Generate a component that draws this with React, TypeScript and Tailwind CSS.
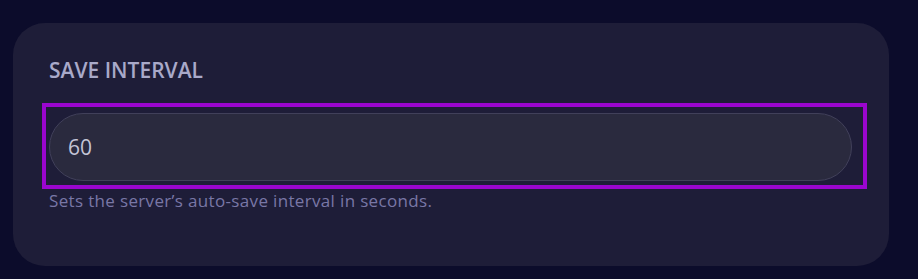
import React from 'react';

const font = { fontFamily: '"Open Sans", "Noto Sans", sans-serif' };

export default function App() {
  return (
    <div className="min-h-[279px] w-full bg-[#0c0c2b] pt-[23px] pl-[13px] pr-[29px] pb-[14px]" style={font}>
      <div className="rounded-[32px] bg-[#1e1d38] pl-[29px] pr-[22px] pt-[33px] pb-[54px]">
        <h2 className="pl-[7px] text-[21px] font-semibold text-[#a9a9c9] leading-[28px]">
          SAVE INTERVAL
        </h2>
        <div className="mt-[19px] border-[4px] border-[#9a06cf] pl-[3px] pt-[6px] pr-[11px] pb-[4px]">
          <input
            type="text"
            defaultValue="60"
            className="block h-[68px] w-full rounded-full border border-[#41405a] bg-[#2a2a3e] px-[18px] text-[21px] text-[#c4c4d6] outline-none"
            style={font}
          />
        </div>
        <p className="pl-[7px] mt-[1px] text-[17px] tracking-[0.02em] leading-[22px] text-[#7977a6]">
          Sets the server’s auto-save interval in seconds.
        </p>
      </div>
    </div>
  );
}
